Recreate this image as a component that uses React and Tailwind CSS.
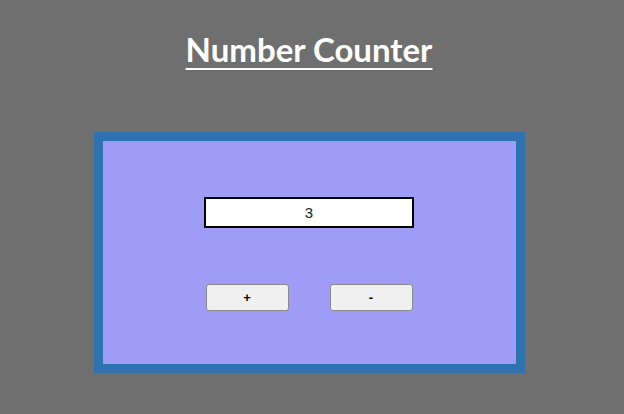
export default function App() {
    return (
        <div className="min-h-[414px] w-full bg-[#6f6f6f] flex flex-col items-center pt-[27px] pr-[6px]" style={{ fontFamily: "Lato, sans-serif" }}>
            <h1 className="text-[33px] leading-[44px] font-bold text-white underline decoration-2 underline-offset-[6px]">
                Number Counter
            </h1>
            <div className="mt-[61px] w-[431px] h-[241px] border-[9px] border-[#2e72b0] bg-[#9e9cf5] flex flex-col items-center pt-[56px]">
                <input
                    type="text"
                    readOnly
                    value="3"
                    className="w-[210px] h-[31px] border-2 border-black bg-white text-center text-[15px] text-[#222] outline-none"
                    style={{ fontFamily: "'Liberation Sans', Arial, sans-serif" }}
                />
                <div className="mt-[56px] flex gap-[41px]" style={{ fontFamily: "'Liberation Sans', Arial, sans-serif" }}>
                    <button className="w-[83px] h-[27px] bg-[#f0f0f0] border border-[#8a8a8a] rounded-[3px] text-[13px] font-bold text-black">+</button>
                    <button className="w-[83px] h-[27px] bg-[#f0f0f0] border border-[#8a8a8a] rounded-[3px] text-[13px] font-bold text-black">-</button>
                </div>
            </div>
        </div>
    );
}
